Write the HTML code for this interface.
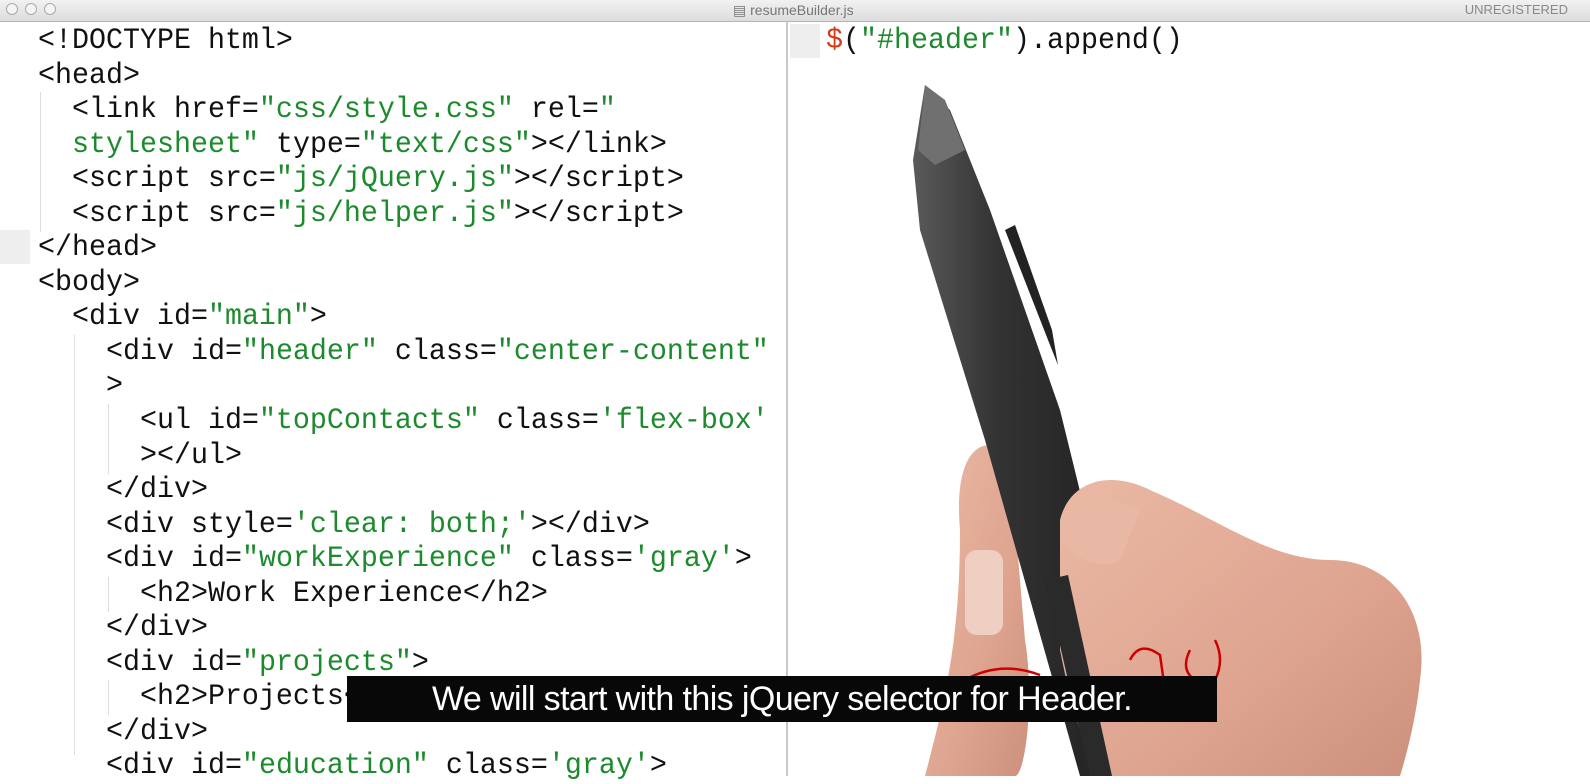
<!DOCTYPE html>
<html><head><style>
html,body{margin:0;padding:0;width:1590px;height:776px;overflow:hidden;background:#fff}
.bar{position:absolute;left:0;top:0;width:1590px;height:21px;background:linear-gradient(#f2f2f2,#dcdcdc);border-bottom:1px solid #b5b5b5}
.dot{position:absolute;top:3px;width:12px;height:12px;border-radius:50%;border:1px solid #aaa;background:#f4f4f4;box-sizing:border-box}
.title{position:absolute;top:2px;left:733px;font:14px "Liberation Sans",sans-serif;color:#777}
.unreg{position:absolute;top:2px;right:22px;font:13px "Liberation Sans",sans-serif;color:#888}
.code{position:absolute;left:38px;top:24px;font:30px/34.55px "Liberation Mono",monospace;color:#111;white-space:pre;transform:scaleX(0.944);transform-origin:0 0}
.g{color:#1e8a2e}
.r{color:#d43a14}
.div{position:absolute;left:786px;top:22px;width:2px;height:754px;background:#c8c8c8}
.sub{position:absolute;left:347px;top:676px;width:870px;height:46px;background:#080808;color:#fff;font:34px/46px "Liberation Sans",sans-serif;text-align:center;letter-spacing:-0.6px}
.guide{position:absolute;width:1px;background:#ddd}
</style></head><body>
<div class="bar"></div>
<div class="dot" style="left:6px"></div><div class="dot" style="left:25px"></div><div class="dot" style="left:44px"></div>
<div class="title">▤ resumeBuilder.js</div>
<div class="unreg">UNREGISTERED</div>
<div style="position:absolute;left:0;top:230px;width:30px;height:34px;background:#eee"></div>
<div style="position:absolute;left:790px;top:24px;width:30px;height:34px;background:#eee"></div>
<div class="guide" style="left:40px;top:92px;height:140px"></div>
<div class="guide" style="left:74px;top:335px;height:420px"></div>
<div class="guide" style="left:108px;top:404px;height:70px"></div>
<div class="guide" style="left:108px;top:577px;height:35px"></div>
<div class="guide" style="left:108px;top:680px;height:35px"></div>
<div class="code">&lt;!DOCTYPE html&gt;
&lt;head&gt;
  &lt;link href=<span class="g">"css/style.css"</span> rel=<span class="g">"</span>
  <span class="g">stylesheet"</span> type=<span class="g">"text/css"</span>&gt;&lt;/link&gt;
  &lt;script src=<span class="g">"js/jQuery.js"</span>&gt;&lt;/script&gt;
  &lt;script src=<span class="g">"js/helper.js"</span>&gt;&lt;/script&gt;
&lt;/head&gt;
&lt;body&gt;
  &lt;div id=<span class="g">"main"</span>&gt;
    &lt;div id=<span class="g">"header"</span> class=<span class="g">"center-content"</span>
    &gt;
      &lt;ul id=<span class="g">"topContacts"</span> class=<span class="g">'flex-box'</span>
      &gt;&lt;/ul&gt;
    &lt;/div&gt;
    &lt;div style=<span class="g">'clear: both;'</span>&gt;&lt;/div&gt;
    &lt;div id=<span class="g">"workExperience"</span> class=<span class="g">'gray'</span>&gt;
      &lt;h2&gt;Work Experience&lt;/h2&gt;
    &lt;/div&gt;
    &lt;div id=<span class="g">"projects"</span>&gt;
      &lt;h2&gt;Projects&lt;/h2&gt;
    &lt;/div&gt;
    &lt;div id=<span class="g">"education"</span> class=<span class="g">'gray'</span>&gt;</div>
<div class="code" style="left:826px"><span class="r">$</span>(<span class="g">"#header"</span>).append()</div>
<div class="div"></div>
<svg style="position:absolute;left:0;top:0" width="1590" height="776">
 <defs>
  <linearGradient id="pen" x1="0" x2="1"><stop offset="0" stop-color="#5a5a5a"/><stop offset="0.35" stop-color="#333"/><stop offset="1" stop-color="#1c1c1c"/></linearGradient>
  <linearGradient id="skin" x1="0" y1="0" x2="1" y2="1"><stop offset="0" stop-color="#eab9a4"/><stop offset="0.6" stop-color="#dea490"/><stop offset="1" stop-color="#cc907c"/></linearGradient>
 </defs>
 <path d="M960,530 C955,470 970,445 990,445 L1010,460 L1025,640 C1035,700 1025,776 1015,776 L925,776 C945,700 960,640 960,530 Z" fill="url(#skin)"/>
 <path d="M925,85 L950,110 L990,210 L1060,410 L1150,776 L1080,776 L985,440 L920,230 L913,160 Z" fill="url(#pen)"/>
 <path d="M1005,230 L1050,345 L1058,365 L1052,330 L1015,225 Z" fill="#222"/>
 <path d="M925,85 L945,100 L965,150 L935,165 L918,150 Z" fill="#707070"/>
 <path d="M1060,520 C1070,480 1110,470 1150,490 C1220,520 1270,560 1330,560 C1390,560 1430,610 1420,680 C1415,730 1400,776 1400,776 L1100,776 C1080,740 1070,700 1060,650 Z" fill="url(#skin)"/>
 <path d="M1060,520 C1080,500 1110,495 1140,510 L1120,560 C1100,570 1075,560 1060,540 Z" fill="#e9b8a5"/>
 <rect x="965" y="550" width="38" height="85" rx="12" fill="#f0cfc3"/>
 <path d="M1045,580 L1090,776 L1112,776 L1068,575 Z" fill="#2a2a2a"/>
 <path d="M965,680 Q1000,660 1040,675 M1130,660 Q1140,640 1160,655 L1165,690 M1190,650 Q1180,670 1195,680 M1215,640 Q1225,660 1215,680" stroke="#c00" stroke-width="2.5" fill="none"/>
</svg>
<div class="sub">We will start with this jQuery selector for Header.</div>
</body></html>
